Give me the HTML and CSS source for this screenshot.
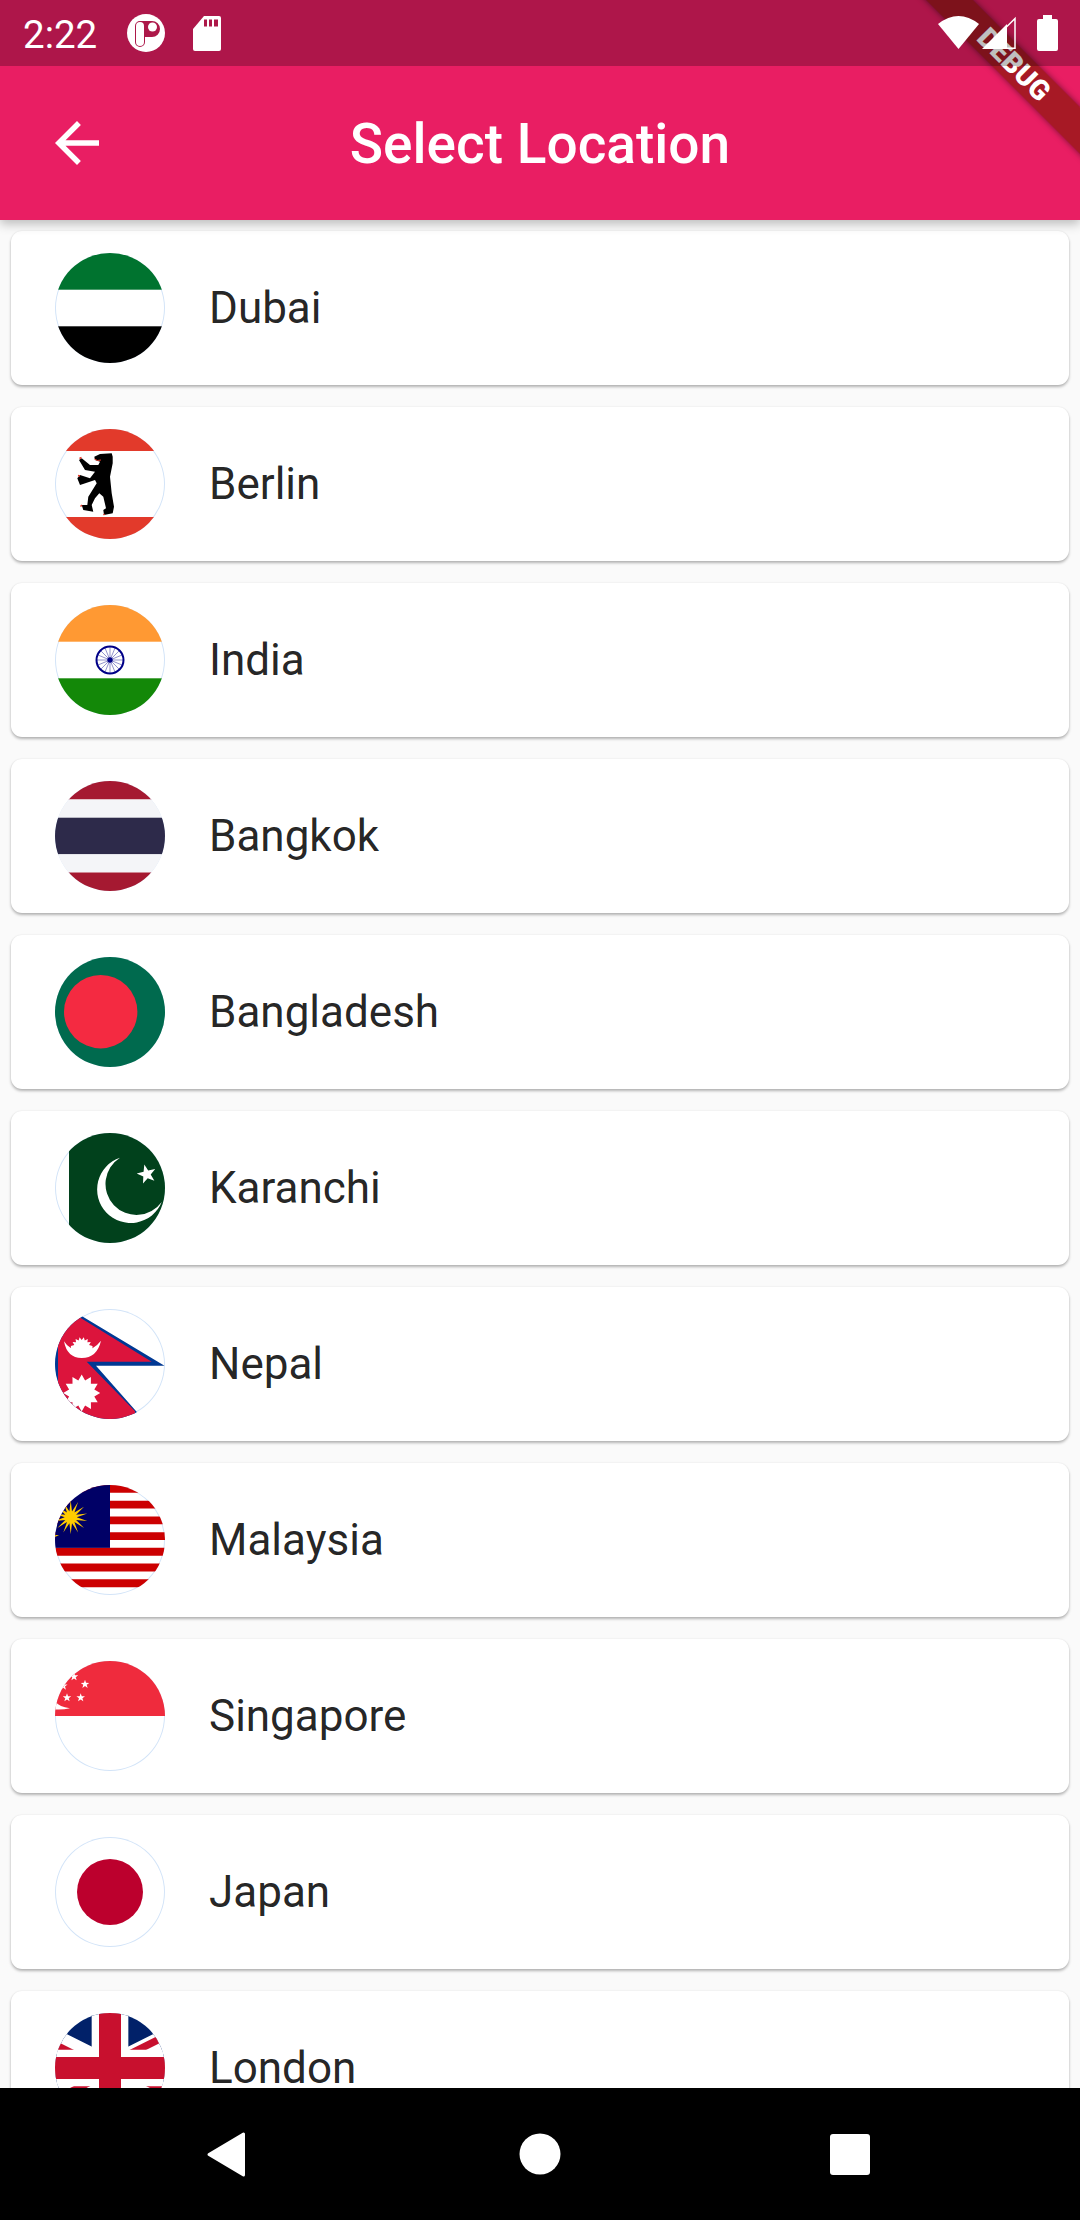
FILE: index.html
```html
<!DOCTYPE html>
<html lang="en">
<head>
    <meta charset="UTF-8">
    <meta name="viewport" content="width=device-width, initial-scale=1.0">
    <title>Select Location</title>
    <link rel="stylesheet" href="styles.css">
</head>
<body>

    <header class="app-header">
        <div class="debug-corner"><div class="debug-banner">DEBUG</div></div>

        <div class="status-bar">
            <span class="status-time">2:22</span>
            <svg class="status-app" width="38" height="38" viewBox="0 0 38 38">
                <circle cx="19" cy="19" r="19" fill="#fff"/>
                <path d="M8 12a5 5 0 0 1 5-5h12a8 8 0 0 1 0 16h-7v5a5 5 0 0 1-10 0z" fill="#ad1849"/>
                <rect x="9" y="8" width="8" height="24" rx="4" fill="#fff"/>
                <circle cx="25.5" cy="13" r="4.5" fill="#fff"/>
            </svg>
            <svg class="status-sd" width="28" height="38" viewBox="0 0 28 38">
                <path d="M11 2h15a2 2 0 0 1 2 2v31a2 2 0 0 1-2 2H2a2 2 0 0 1-2-2V15z" fill="#fff"/>
                <path d="M11 5.500h3v7h-3zM16 5.500h3v7h-3zM21 5.500h4v7h-4z" fill="#ad1849"/>
            </svg>
            <svg class="status-wifi" width="41" height="38" viewBox="0 0 41 38">
                <path d="M0 10Q20.500-6 41 10L20.500 35z" fill="#fff"/>
            </svg>
            <svg class="status-signal" width="34" height="38" viewBox="0 0 34 38">
                <path d="M33 4.500V34.200H3z" fill="none" stroke="#fff" stroke-width="1.500"/>
                <path d="M0 35L25 10V35z" fill="#fff"/>
            </svg>
            <svg class="status-battery" width="21" height="38" viewBox="0 0 21 38">
                <path d="M6 1h9v4h4a2 2 0 0 1 2 2v28a2 2 0 0 1-2 2H2a2 2 0 0 1-2-2V7a2 2 0 0 1 2-2h4z" fill="#fff"/>
            </svg>
        </div>

        <div class="app-bar">
            <button class="back-button">
                <svg width="66" height="66" viewBox="0 0 24 24"><path d="M20 11H7.830l5.590-5.590L12 4l-8 8 8 8 1.410-1.410L7.830 13H20v-2z" fill="#fff"/></svg>
            </button>
            <h1 class="app-title">Select Location</h1>
        </div>
    </header>

    <main class="location-list">

        <div class="location-card">
            <div class="location-flag">
                <svg width="110" height="110" viewBox="0 0 110 110">
                    <rect width="110" height="36.700" fill="#00732f"/>
                    <rect y="73.300" width="110" height="36.700" fill="#000"/>
                </svg>
            </div>
            <span class="location-name">Dubai</span>
        </div>

        <div class="location-card">
            <div class="location-flag">
                <svg width="110" height="110" viewBox="0 0 110 110">
                    <rect width="110" height="22" fill="#e23a2b"/>
                    <rect y="88" width="110" height="22" fill="#e23a2b"/>
                    <path d="M45 25L56.700 24.300 57.700 27.700V34.300L55 47.700 56.700 64.300 59 77.700 57.700 84.300 49 86 48.300 81 51 79.300 48.300 67.700 44.300 64.300 40 69.300 36.700 76 38.300 82.700 28.300 81 26.700 76H32.300L33.300 67.700 41.700 54.300 40 51 25 56 22.300 49.300 25 46 35 49.300 40 42.700 30 41 24 31 26.700 29.300 35 36H43.300L45 32.700 40 31 39.300 27.700z" fill="#000"/>
                    <path d="M39.500 30Q42 32.500 46 31" fill="none" stroke="#e23a2b" stroke-width="1"/>
                    <path d="M24.500 29.500l2-1M23 46.500l2 .500M27 76l-1.500 1.500M48.500 85l1 1" stroke="#e23a2b" stroke-width="1.500"/>
                </svg>
            </div>
            <span class="location-name">Berlin</span>
        </div>

        <div class="location-card">
            <div class="location-flag">
                <svg width="110" height="110" viewBox="0 0 110 110">
                    <rect width="110" height="36.700" fill="#ff9933"/>
                    <rect y="73.300" width="110" height="36.700" fill="#138808"/>
                    <circle cx="55" cy="55" r="13.500" fill="none" stroke="#000088" stroke-width="2"/>
                    <path d="M55 42V68M42 55H68M45.800 45.800L64.200 64.200M64.200 45.800L45.800 64.200M50 43L60 67M60 43L50 67M43 50L67 60M43 60L67 50" stroke="#000088" stroke-width=".6" opacity=".7"/>
                    <circle cx="55" cy="55" r="2.700" fill="#000088"/>
                </svg>
            </div>
            <span class="location-name">India</span>
        </div>

        <div class="location-card">
            <div class="location-flag">
                <svg width="110" height="110" viewBox="0 0 110 110">
                    <rect width="110" height="18.500" fill="#a51931"/>
                    <rect y="18.500" width="110" height="18.200" fill="#f4f5f8"/>
                    <rect y="36.700" width="110" height="36.600" fill="#2d2a4a"/>
                    <rect y="73.300" width="110" height="18.200" fill="#f4f5f8"/>
                    <rect y="91.500" width="110" height="18.500" fill="#a51931"/>
                </svg>
            </div>
            <span class="location-name">Bangkok</span>
        </div>

        <div class="location-card">
            <div class="location-flag">
                <svg width="110" height="110" viewBox="0 0 110 110">
                    <rect width="110" height="110" fill="#006a4e"/>
                    <circle cx="45.700" cy="54.700" r="36.700" fill="#f42a41"/>
                </svg>
            </div>
            <span class="location-name">Bangladesh</span>
        </div>

        <div class="location-card">
            <div class="location-flag">
                <svg width="110" height="110" viewBox="0 0 110 110">
                    <rect x="14" width="96" height="110" fill="#01411c"/>
                    <path d="M65 24.700A33.500 33.500 0 1 0 106.700 69A31 31 0 1 1 65 24.700z" fill="#fff"/>
                    <polygon points="81.700,40.600 88.600,38.700 89.300,31.600 93.200,37.600 100.200,36 95.700,41.600 99.400,47.700 92.700,45.200 88,50.600 88.300,43.400" fill="#fff"/>
                </svg>
            </div>
            <span class="location-name">Karanchi</span>
        </div>

        <div class="location-card">
            <div class="location-flag">
                <svg width="110" height="110" viewBox="0 0 110 110">
                    <polygon points="-5,-12 109.500,56.700 41,56.700 88,110 -5,110" fill="#003893"/>
                    <polygon points="3,-5 96.700,52.700 31.700,52.700 80,102.300 80,115 3,115" fill="#dc143c"/>
                    <path d="M9 32.300Q12 49 26.700 49Q42 49 46 31.700Q38 42 26.700 42Q15 42 9 32.300z" fill="#fff"/>
                    <polygon points="15.900,36.900 19.300,35.900 17.600,32.900 21,33.300 20.600,29.900 23.600,31.600 24.600,28.200 26.700,31 28.800,28.200 29.800,31.600 32.800,29.900 32.400,33.300 35.800,32.900 34.100,35.900 37.500,36.900 37.500,43 15.900,43" fill="#fff"/>
                    <polygon points="45.200,84 39.300,87.400 42.700,93.250 35.900,93.200 36,100 30.100,96.600 26.700,102.500 23.300,96.600 17.500,100 17.500,93.200 10.700,93.250 14.100,87.400 8.200,84 14.100,80.600 10.700,74.750 17.500,74.800 17.450,68 23.300,71.400 26.700,65.500 30.100,71.400 35.950,68 35.900,74.800 42.700,74.750 39.300,80.600" fill="#fff"/>
                </svg>
            </div>
            <span class="location-name">Nepal</span>
        </div>

        <div class="location-card">
            <div class="location-flag">
                <svg width="110" height="110" viewBox="0 0 110 110">
                    <path d="M0 0H110V7.860H0zM0 15.710H110V23.570H0zM0 31.430H110V39.290H0zM0 47.140H110V55H0zM0 62.860H110V70.710H0zM0 78.570H110V86.430H0zM0 94.290H110V102.140H0z" fill="#cc0001"/>
                    <rect width="55" height="62.860" fill="#000066"/>
                    <polygon points="15.700,15.300 17,26.500 23.100,17 19.400,27.600 29,21.700 21.100,29.700 32.300,28.500 21.700,32.300 32.300,36.100 21.100,34.900 29,42.900 19.400,37 23.100,47.600 17,38.200 15.700,49.300 14.400,38.200 8.300,47.600 12,37 2.400,42.900 10.300,34.900 -0.900,36.100 9.700,32.300 -0.900,28.500 10.300,29.700 2.400,21.700 12,27.600 8.300,17 14.400,26.500" fill="#ffcc00"/>
                    <path d="M0 52L4 50H0z" fill="#ffcc00"/>
                </svg>
            </div>
            <span class="location-name">Malaysia</span>
        </div>

        <div class="location-card">
            <div class="location-flag">
                <svg width="110" height="110" viewBox="0 0 110 110">
                    <defs>
                        <polygon id="sg-star" points="0,-4.500 1.060,-1.460 4.280,-1.390 1.710,.560 2.650,3.640 0,1.800 -2.650,3.640 -1.710,.560 -4.280,-1.390 -1.060,-1.460" fill="#fff"/>
                    </defs>
                    <rect width="110" height="55" fill="#ef2b3d"/>
                    <use href="#sg-star" x="19" y="15.700"/>
                    <use href="#sg-star" x="30" y="23.300"/>
                    <use href="#sg-star" x="25.700" y="36.700"/>
                    <use href="#sg-star" x="12" y="36.700"/>
                    <use href="#sg-star" x="8.300" y="25"/>
                    <path d="M0 40Q4 46 15 47.300Q8 49 0 48.500z" fill="#fff"/>
                </svg>
            </div>
            <span class="location-name">Singapore</span>
        </div>

        <div class="location-card">
            <div class="location-flag">
                <svg width="110" height="110" viewBox="0 0 110 110">
                    <circle cx="55" cy="55" r="33" fill="#bc002d"/>
                </svg>
            </div>
            <span class="location-name">Japan</span>
        </div>

        <div class="location-card">
            <div class="location-flag">
                <svg width="110" height="110" viewBox="0 0 110 110">
                    <defs>
                        <clipPath id="uk-clip"><path d="M30,15h30v15zv15h-30zh-30v-15zv-15h30z"/></clipPath>
                    </defs>
                    <g transform="translate(-55 0) scale(3.667)">
                        <rect width="60" height="30" fill="#012169"/>
                        <path d="M0,0L60,30M60,0L0,30" stroke="#fff" stroke-width="6"/>
                        <path d="M0,0L60,30M60,0L0,30" clip-path="url(#uk-clip)" stroke="#c8102e" stroke-width="4"/>
                        <path d="M30,0v30M0,15h60" stroke="#fff" stroke-width="10"/>
                        <path d="M30,0v30M0,15h60" stroke="#c8102e" stroke-width="6"/>
                    </g>
                </svg>
            </div>
            <span class="location-name">London</span>
        </div>

    </main>

    <nav class="nav-bar">
        <svg width="66" height="66" viewBox="0 0 66 66"><path d="M14 33.500L48.500 13V54z" fill="#fff" stroke="#fff" stroke-width="3" stroke-linejoin="round"/></svg>
        <svg width="66" height="66" viewBox="0 0 66 66"><circle cx="33" cy="33" r="20.500" fill="#fff"/></svg>
        <svg width="66" height="66" viewBox="0 0 66 66"><rect x="11" y="13" width="40" height="41" rx="3" fill="#fff"/></svg>
    </nav>

</body>
</html>
```

FILE: styles.css
```css
body {
    font-family: 'Roboto', 'Liberation Sans', sans-serif;
    background-color: #fafafa;
    margin: 0;
    padding: 0;
    width: 1080px;
    height: 2220px;
    display: flex;
    flex-direction: column;
    overflow: hidden;
}

.app-header {
    position: relative;
    z-index: 1;
    flex: none;
    height: 220px;
    background-color: #e91e63;
    box-shadow: 0 4px 10px rgba(0, 0, 0, 0.25);
}

/* status bar scrim sits over the debug ribbon, same as on the device */
.status-bar {
    position: absolute;
    top: 0;
    left: 0;
    right: 0;
    height: 66px;
    padding: 0 22px 0 23px;
    box-sizing: border-box;
    display: flex;
    align-items: center;
    background-color: rgba(0, 0, 0, 0.25);
    color: #fff;
}

.status-bar svg {
    display: block;
}

.status-time {
    font-size: 38.5px;
    padding-top: 2px;
    width: 73px;
}

.status-app {
    margin-left: 31px;
}

.status-sd {
    margin-left: 28px;
}

.status-wifi {
    margin-left: auto;
}

.status-signal {
    margin-left: 3px;
}

.status-battery {
    margin-left: 21px;
}

.debug-corner {
    position: absolute;
    top: 0;
    right: 0;
    width: 200px;
    height: 200px;
    overflow: hidden;
}

.debug-banner {
    position: absolute;
    left: -16px;
    top: 48px;
    width: 300px;
    height: 33px;
    line-height: 33px;
    text-align: center;
    font-size: 28px;
    font-weight: 900;
    color: #fff;
    background-color: rgba(160, 24, 30, 0.9);
    box-shadow: 0 0 6px rgba(0, 0, 0, 0.5);
    transform: rotate(45deg);
}

.app-bar {
    height: 154px;
    margin-top: 66px;
    position: absolute;
    top: 0;
    left: 0;
    right: 0;
    display: grid;
    grid-template-columns: 154px 1fr 154px;
    align-items: center;
}

.back-button {
    width: 154px;
    height: 154px;
    padding: 44px;
    background: none;
    border: none;
    box-sizing: border-box;
}

.back-button svg {
    display: block;
}

.app-title {
    margin: 0;
    padding-top: 2px;
    font-size: 55px;
    font-weight: 500;
    color: #fff;
    text-align: center;
}

.location-list {
    flex: 1;
    min-height: 0;
    overflow: hidden;
    padding: 11px 11px 0;
    display: flex;
    flex-direction: column;
    gap: 22px;
}

.location-card {
    flex: none;
    height: 154px;
    padding: 22px 44px;
    box-sizing: border-box;
    display: flex;
    align-items: center;
    gap: 44px;
    background-color: #fff;
    border-radius: 11px;
    box-shadow: 0 2px 3px rgba(0, 0, 0, 0.28), 0 0 2px rgba(0, 0, 0, 0.08);
}

.location-flag {
    width: 110px;
    height: 110px;
    border-radius: 50%;
    overflow: hidden;
    box-shadow: inset 0 0 0 1px #d3e4f8;
}

.location-flag svg {
    display: block;
}

.location-name {
    font-size: 44px;
    color: rgba(0, 0, 0, 0.87);
}

.nav-bar {
    flex: none;
    height: 132px;
    padding-left: 195px;
    display: flex;
    align-items: center;
    gap: 246px;
    background-color: #000;
}
```
